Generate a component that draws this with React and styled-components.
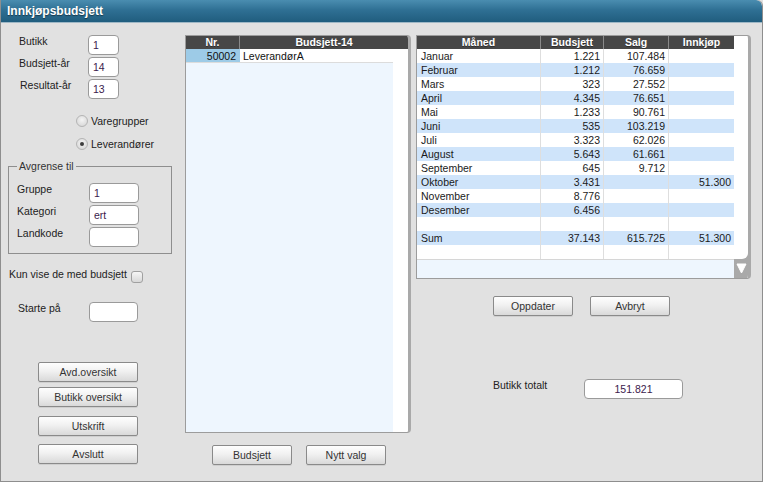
import React from 'react';
import styled, { createGlobalStyle } from 'styled-components';

const GlobalStyle = createGlobalStyle`
  html, body {
    margin: 0;
    padding: 0;
    background: #e1e1e1;
  }
  body {
    font-family: "Liberation Sans", Arial, sans-serif;
    font-size: 10.5px;
    color: #222;
  }
`;

const Window = styled.div`
  width: 763px;
  height: 482px;
  box-sizing: border-box;
  border: 1px solid #8e8e8e;
  border-top: none;
  border-radius: 0 6px 0 0;
  background: #e1e1e1;
  display: flex;
  flex-direction: column;
  overflow: hidden;
`;

const TitleBar = styled.div`
  height: 22px;
  flex-shrink: 0;
  display: flex;
  align-items: center;
  padding-left: 6px;
  background: linear-gradient(#4a8db0, #2f7094 45%, #205d7e);
  border-bottom: 1px solid #9fb8c6;
  border-radius: 0 6px 0 0;
  color: #fff;
  font-weight: bold;
  font-size: 12px;
  text-shadow: 0 1px 1px rgba(0, 0, 0, 0.45);
`;

const Body = styled.div`
  flex: 1;
  display: flex;
  align-items: flex-start;
`;

const LeftCol = styled.div`
  width: 184px;
  flex-shrink: 0;
  display: flex;
  flex-direction: column;
  padding-top: 12px;
`;

const Field = styled.div`
  display: flex;
  align-items: flex-start;
  margin-top: ${p => p.$top || 0}px;
  padding-left: ${p => p.$indent || 0}px;
`;

const FieldLabel = styled.span`
  width: ${p => p.$w}px;
  flex-shrink: 0;
  line-height: 13px;
`;

const TextInput = styled.input`
  width: ${p => p.$w}px;
  height: 20px;
  box-sizing: border-box;
  border: 1px solid #9a9a9a;
  border-radius: 4px;
  background: #fff;
  padding: 0 4px;
  margin: 0;
  font-family: inherit;
  font-size: 10.5px;
  color: #3b1a4c;
  text-align: ${p => (p.$center ? 'center' : 'left')};
  outline: none;
`;

const RadioGroup = styled.div`
  display: flex;
  flex-direction: column;
  gap: 11px;
  margin-top: 16px;
  padding-left: 75px;
`;

const RadioItem = styled.label`
  display: flex;
  align-items: center;
  gap: 3px;
  height: 12px;
  line-height: 12px;
`;

const RadioDot = styled.span`
  width: 12px;
  height: 12px;
  box-sizing: border-box;
  border-radius: 50%;
  border: 1px solid #b4b4b4;
  background: radial-gradient(circle at 50% 40%, #f4f4f4, #d2d2d2);
  display: flex;
  align-items: center;
  justify-content: center;
  &::after {
    content: '';
    width: 4px;
    height: 4px;
    border-radius: 50%;
    background: ${p => (p.$checked ? '#3c3c3c' : 'transparent')};
  }
`;

const FieldSet = styled.fieldset`
  width: 164px;
  box-sizing: border-box;
  margin: 10px 0 0 7px;
  padding: 10px 6px 6px 8px;
  border: 1px solid #8e8e8e;
  display: flex;
  flex-direction: column;
  gap: 2px;
  min-width: 0;
`;

const Legend = styled.legend`
  padding: 0 2px;
  line-height: 13px;
  color: #333;
`;

const CheckRow = styled.div`
  display: flex;
  align-items: flex-start;
  gap: 4px;
  margin-top: 14px;
  padding-left: 8px;
  line-height: 13px;
`;

const CheckBox = styled.span`
  width: 12px;
  height: 12px;
  margin-top: 3px;
  box-sizing: border-box;
  border: 1px solid #a0a0a0;
  border-radius: 3px;
  background: linear-gradient(#f6f6f6, #d8d8d8);
`;

const ButtonStack = styled.div`
  display: flex;
  flex-direction: column;
  margin-top: 40px;
  padding-left: 37px;
`;

const Button = styled.button`
  width: ${p => p.$w || 80}px;
  height: 20px;
  margin: ${p => p.$top || 0}px 0 0 0;
  padding: 0;
  box-sizing: border-box;
  border: 1px solid #8a8a8a;
  border-radius: 2px;
  background: linear-gradient(#fefefe, #f1f1f1 45%, #d9d9d9);
  box-shadow: 0 1px 0 rgba(0, 0, 0, 0.08);
  font-family: inherit;
  font-size: 10.5px;
  color: #333;
  cursor: pointer;
`;

const MidCol = styled.div`
  width: 231px;
  flex-shrink: 0;
  display: flex;
  flex-direction: column;
  padding-top: 12px;
`;

const Frame = styled.div`
  width: ${p => p.$w}px;
  height: ${p => p.$h}px;
  box-sizing: border-box;
  border: 1px solid #9c9c9c;
  border-right: 3px solid #a9a9a9;
  border-radius: 0 4px 4px 0;
  background: #fff;
  display: flex;
  overflow: hidden;
`;

const FrameMain = styled.div`
  display: flex;
  flex-direction: column;
  width: ${p => (p.$w ? `${p.$w}px` : 'auto')};
  flex: ${p => (p.$w ? '0 0 auto' : '1')};
`;

const HeadRow = styled.div`
  display: flex;
  height: 13px;
  background: #474747;
  flex-shrink: 0;
`;

const HeadCell = styled.div`
  width: ${p => (p.$w ? `${p.$w}px` : 'auto')};
  flex: ${p => (p.$w ? '0 0 auto' : '1')};
  box-sizing: border-box;
  border-right: ${p => (p.$last ? 'none' : '1px solid #8a8a8a')};
  color: #fff;
  font-weight: bold;
  text-align: center;
  line-height: 13px;
  text-shadow: 0 1px 0 rgba(0, 0, 0, 0.4);
`;

const ListBody = styled.div`
  flex: 1;
  display: flex;
`;

const ListData = styled.div`
  width: 207px;
  background: #eef6fe;
`;

const WhiteStrip = styled.div`
  flex: 1;
  background: #fff;
`;

const ListRow = styled.div`
  display: flex;
  height: 14px;
  line-height: 14px;
  border-bottom: 1px solid #dcdcdc;
  box-sizing: border-box;
`;

const ListCell = styled.div`
  width: ${p => (p.$w ? `${p.$w}px` : 'auto')};
  flex: ${p => (p.$w ? '0 0 auto' : '1')};
  box-sizing: border-box;
  background: ${p => (p.$sel ? '#9dcbe7' : '#fff')};
  text-align: ${p => (p.$right ? 'right' : 'left')};
  padding: ${p => (p.$right ? '0 4px 0 0' : '0 0 0 3px')};
  color: #111;
`;

const ButtonRow = styled.div`
  display: flex;
  gap: ${p => p.$gap}px;
  margin-top: ${p => p.$top}px;
  padding-left: ${p => p.$indent}px;
`;

const RightCol = styled.div`
  flex: 1;
  display: flex;
  flex-direction: column;
  padding-top: 12px;
`;

const DataRow = styled.div`
  display: flex;
  height: 14px;
  line-height: 14px;
  background: ${p => (p.$alt ? '#cfe4fa' : '#fff')};
`;

const DataCell = styled.div`
  width: ${p => p.$w}px;
  box-sizing: border-box;
  border-right: ${p => (p.$last ? 'none' : '1px solid #dedede')};
  text-align: ${p => (p.$right ? 'right' : 'left')};
  padding: ${p => (p.$right ? '0 3px 0 0' : '0 0 0 4px')};
  color: #1a1a1a;
`;

const TableFooter = styled.div`
  height: 19px;
  background: #eef6fe;
  border-top: 1px solid #d6d6d6;
  box-sizing: border-box;
`;

const SideCol = styled.div`
  flex: 1;
  display: flex;
  flex-direction: column;
  background: #a9a9a9;
`;

const SideFill = styled.div`
  flex: 1;
  background: #fff;
  border-bottom-right-radius: 6px;
`;

const ScrollDown = styled.div`
  height: 19px;
  display: flex;
  align-items: center;
  justify-content: center;
`;

const months = [
  ['Januar', '1.221', '107.484', ''],
  ['Februar', '1.212', '76.659', ''],
  ['Mars', '323', '27.552', ''],
  ['April', '4.345', '76.651', ''],
  ['Mai', '1.233', '90.761', ''],
  ['Juni', '535', '103.219', ''],
  ['Juli', '3.323', '62.026', ''],
  ['August', '5.643', '61.661', ''],
  ['September', '645', '9.712', ''],
  ['Oktober', '3.431', '', '51.300'],
  ['November', '8.776', '', ''],
  ['Desember', '6.456', '', ''],
  ['', '', '', ''],
  ['Sum', '37.143', '615.725', '51.300'],
  ['', '', '', ''],
];

const colW = [124, 63, 65, 65];

const App = () => {
  return (
    <>
      <GlobalStyle />
      <Window>
        <TitleBar>Innkjøpsbudsjett</TitleBar>
        <Body>
          <LeftCol>
            <Field $indent={18}>
              <FieldLabel $w={69}>Butikk</FieldLabel>
              <TextInput $w={31} defaultValue="1" />
            </Field>
            <Field $indent={18} $top={2}>
              <FieldLabel $w={69}>Budsjett-år</FieldLabel>
              <TextInput $w={31} defaultValue="14" />
            </Field>
            <Field $indent={19} $top={2}>
              <FieldLabel $w={68}>Resultat-år</FieldLabel>
              <TextInput $w={31} defaultValue="13" />
            </Field>

            <RadioGroup>
              <RadioItem><RadioDot />Varegrupper</RadioItem>
              <RadioItem><RadioDot $checked />Leverandører</RadioItem>
            </RadioGroup>

            <FieldSet>
              <Legend>Avgrense til</Legend>
              <Field>
                <FieldLabel $w={72}>Gruppe</FieldLabel>
                <TextInput $w={50} defaultValue="1" />
              </Field>
              <Field>
                <FieldLabel $w={72}>Kategori</FieldLabel>
                <TextInput $w={50} defaultValue="ert" />
              </Field>
              <Field>
                <FieldLabel $w={72}>Landkode</FieldLabel>
                <TextInput $w={50} defaultValue="" />
              </Field>
            </FieldSet>

            <CheckRow>
              <span>Kun vise de med budsjett</span>
              <CheckBox />
            </CheckRow>

            <Field $indent={17} $top={19}>
              <FieldLabel $w={71}>Starte på</FieldLabel>
              <TextInput $w={49} defaultValue="" />
            </Field>

            <ButtonStack>
              <Button $w={100}>Avd.oversikt</Button>
              <Button $w={100} $top={5}>Butikk oversikt</Button>
              <Button $w={100} $top={9}>Utskrift</Button>
              <Button $w={100} $top={8}>Avslutt</Button>
            </ButtonStack>
          </LeftCol>

          <MidCol>
            <Frame $w={226} $h={398}>
              <FrameMain>
                <HeadRow>
                  <HeadCell $w={54}>Nr.</HeadCell>
                  <HeadCell $last>Budsjett-14</HeadCell>
                </HeadRow>
                <ListBody>
                  <ListData>
                    <ListRow>
                      <ListCell $w={54} $sel $right>50002</ListCell>
                      <ListCell>LeverandørA</ListCell>
                    </ListRow>
                  </ListData>
                  <WhiteStrip />
                </ListBody>
              </FrameMain>
            </Frame>
            <ButtonRow $top={12} $indent={27} $gap={14}>
              <Button>Budsjett</Button>
              <Button>Nytt valg</Button>
            </ButtonRow>
          </MidCol>

          <RightCol>
            <Frame $w={335} $h={244}>
              <FrameMain $w={317}>
                <HeadRow>
                  <HeadCell $w={124}>Måned</HeadCell>
                  <HeadCell $w={63}>Budsjett</HeadCell>
                  <HeadCell $w={65}>Salg</HeadCell>
                  <HeadCell $w={65} $last>Innkjøp</HeadCell>
                </HeadRow>
                {months.map((m, i) => (
                  <DataRow key={i} $alt={i % 2 === 1}>
                    <DataCell $w={colW[0]}>{m[0]}</DataCell>
                    <DataCell $w={colW[1]} $right>{m[1]}</DataCell>
                    <DataCell $w={colW[2]} $right>{m[2]}</DataCell>
                    <DataCell $w={colW[3]} $right $last>{m[3]}</DataCell>
                  </DataRow>
                ))}
                <TableFooter />
              </FrameMain>
              <SideCol>
                <SideFill />
                <ScrollDown>
                  <svg width="11" height="11" viewBox="0 0 11 11">
                    <path d="M1 1 L10 1 L5.5 10 Z" fill="#fff" stroke="#fff" strokeWidth="1" strokeLinejoin="round" />
                  </svg>
                </ScrollDown>
              </SideCol>
            </Frame>
            <ButtonRow $top={17} $indent={77} $gap={17}>
              <Button>Oppdater</Button>
              <Button>Avbryt</Button>
            </ButtonRow>
            <Field $indent={77} $top={63}>
              <FieldLabel $w={91}>Butikk totalt</FieldLabel>
              <TextInput $w={99} $center defaultValue="151.821" />
            </Field>
          </RightCol>
        </Body>
      </Window>
    </>
  );
};

export default App;
